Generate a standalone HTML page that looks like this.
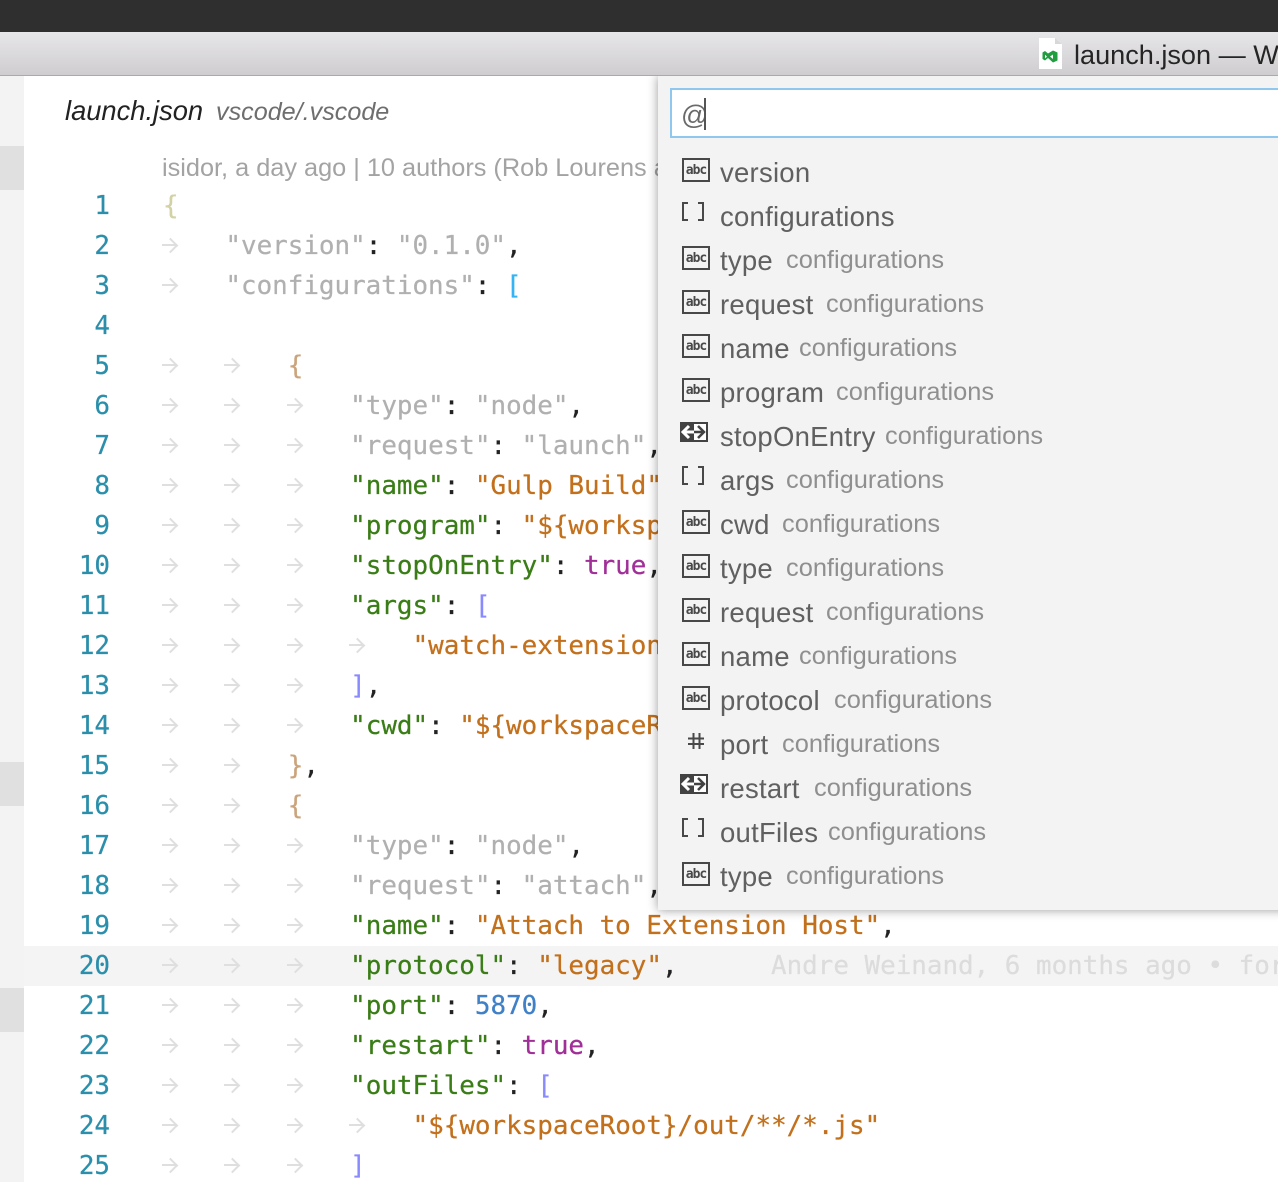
<!DOCTYPE html>
<html><head><meta charset="utf-8">
<style>
html,body{margin:0;padding:0;background:#fff}
#p{position:relative;width:1278px;height:1182px;overflow:hidden;background:#fff;font-family:"Liberation Sans",sans-serif}
#p>div{position:absolute}
.top{left:0;top:0;width:1278px;height:32px;background:#2f2f2f;z-index:2}
.bar{left:0;top:32px;width:1278px;height:43px;background:linear-gradient(#e7e6e8,#cfcdcf);border-bottom:1px solid #aaa;z-index:2}
.side{left:0;top:76px;width:24px;height:1106px;background:#f3f3f3}
.sel{left:0;width:24px;height:44px;background:#e0e0e0}
.hl{left:24px;top:946px;width:1254px;height:40px;background:#f4f4f4}
.n{left:40px;width:70px;height:40px;margin-top:1px;text-align:right;font:25.9px/40px "DejaVu Sans Mono",monospace;color:#2b8fab;-webkit-text-stroke:.25px}
.l{left:163px;height:40px;margin-top:1px;white-space:pre;font:25.9px/40px "DejaVu Sans Mono",monospace;color:#222;-webkit-text-stroke:.25px}
.l i{display:inline-block;width:62.4px;height:40px;position:relative;vertical-align:top;margin-top:-1px}
.l i:before{content:"";position:absolute;left:-1px;top:19px;width:14px;height:2.4px;background:#dfdfdf}
.l i:after{content:"";position:absolute;left:2px;top:14.5px;width:9px;height:9px;border-top:2.4px solid #dfdfdf;border-right:2.4px solid #dfdfdf;transform:rotate(45deg)}
.k{color:#3a7d17}.s{color:#c2701c}.d{color:#b0b0b0}.t{color:#a02f97}.u{color:#3f80c6}.b1{color:#35b4f5}.b2{color:#8a8aff}.b3{color:#cba47c}
.w{left:658px;top:76px;width:640px;height:834px;background:#f3f3f3;box-shadow:0 0 10px rgba(0,0,0,.4)}
.in{left:670px;top:88px;width:640px;height:46px;background:#fff;border:2px solid #8fc8ec}
.r{left:720px;height:44px;line-height:44px;white-space:nowrap;font-size:27.5px;letter-spacing:.25px;color:#606060}
.r span{position:absolute;top:-1px;font-size:25.4px;letter-spacing:0;color:#8f8f8f}
.ab{left:682px;width:24px;height:20px;border:2px solid #484848;font:bold 13px/21px "DejaVu Sans Mono",monospace;color:#484848;text-align:center;letter-spacing:-1px;background:#f3f3f3}
svg{position:absolute;overflow:visible}
</style></head><body><div id="p">
<div class="top"></div>
<div class="bar"></div>
<svg style="left:1039px;top:38px;z-index:3" width="23" height="31"><path d="M0 0h16l7 6v25H0z" fill="#fff"/><path d="M16 0l7 6h-7z" fill="#d8d8d8"/><path d="M14 12.5l4.5 2v8l-4.5 2-5-4.5-3 2.5-2.500-1.500v-6.500l2.500-1.500 3 2.500zM14 16.500l-3 2 3 2.500zM6 16.800v3.600l2-1.800z" fill="#1f9d3f" fill-rule="evenodd"/></svg>
<div style="left:1074px;top:36px;line-height:38px;font-size:27.1px;color:#252525;white-space:nowrap;z-index:3">launch.json — Wo</div>
<div class="side"></div>
<div class="sel" style="top:146px"></div>
<div class="sel" style="top:762px"></div>
<div class="sel" style="top:988px"></div>
<div class="hl"></div>
<div style="left:65px;top:92px;line-height:38px;font-size:27.3px;font-style:italic;color:#222;white-space:nowrap">launch.json</div>
<div style="left:216px;top:93px;line-height:38px;font-size:25.15px;font-style:italic;color:#6e6e6e;white-space:nowrap">vscode/.vscode</div>
<div style="left:162px;top:149px;line-height:38px;font-size:25.3px;color:#a3a3a3;white-space:nowrap">isidor, a day ago | 10 authors (Rob Lourens and others)</div>

<div class="n" style="top:185px">1</div><div class="l" style="top:185px"><span style="color:#d2d2a4">{</span></div>
<div class="n" style="top:225px">2</div><div class="l" style="top:225px"><i></i><span class="d">"version"</span>: <span class="d">"0.1.0"</span>,</div>
<div class="n" style="top:265px">3</div><div class="l" style="top:265px"><i></i><span class="d">"configurations"</span>: <span class="b1">[</span></div>
<div class="n" style="top:305px">4</div>
<div class="n" style="top:345px">5</div><div class="l" style="top:345px"><i></i><i></i><span class="b3">{</span></div>
<div class="n" style="top:385px">6</div><div class="l" style="top:385px"><i></i><i></i><i></i><span class="d">"type"</span>: <span class="d">"node"</span>,</div>
<div class="n" style="top:425px">7</div><div class="l" style="top:425px"><i></i><i></i><i></i><span class="d">"request"</span>: <span class="d">"launch"</span>,</div>
<div class="n" style="top:465px">8</div><div class="l" style="top:465px"><i></i><i></i><i></i><span class="k">"name"</span>: <span class="s">"Gulp Build"</span>,</div>
<div class="n" style="top:505px">9</div><div class="l" style="top:505px"><i></i><i></i><i></i><span class="k">"program"</span>: <span class="s">"${workspaceRoot}"</span>,</div>
<div class="n" style="top:545px">10</div><div class="l" style="top:545px"><i></i><i></i><i></i><span class="k">"stopOnEntry"</span>: <span class="t">true</span>,</div>
<div class="n" style="top:585px">11</div><div class="l" style="top:585px"><i></i><i></i><i></i><span class="k">"args"</span>: <span class="b2">[</span></div>
<div class="n" style="top:625px">12</div><div class="l" style="top:625px"><i></i><i></i><i></i><i></i><span class="s">"watch-extension"</span></div>
<div class="n" style="top:665px">13</div><div class="l" style="top:665px"><i></i><i></i><i></i><span class="b2">]</span>,</div>
<div class="n" style="top:705px">14</div><div class="l" style="top:705px"><i></i><i></i><i></i><span class="k">"cwd"</span>: <span class="s">"${workspaceRoot}"</span></div>
<div class="n" style="top:745px">15</div><div class="l" style="top:745px"><i></i><i></i><span class="b3">}</span>,</div>
<div class="n" style="top:785px">16</div><div class="l" style="top:785px"><i></i><i></i><span class="b3">{</span></div>
<div class="n" style="top:825px">17</div><div class="l" style="top:825px"><i></i><i></i><i></i><span class="d">"type"</span>: <span class="d">"node"</span>,</div>
<div class="n" style="top:865px">18</div><div class="l" style="top:865px"><i></i><i></i><i></i><span class="d">"request"</span>: <span class="d">"attach"</span>,</div>
<div class="n" style="top:905px">19</div><div class="l" style="top:905px"><i></i><i></i><i></i><span class="k">"name"</span>: <span class="s">"Attach to Extension Host"</span>,</div>
<div class="n" style="top:945px">20</div><div class="l" style="top:945px"><i></i><i></i><i></i><span class="k">"protocol"</span>: <span class="s">"legacy"</span>,</div>
<div class="l" style="top:945px;left:771px;color:#dcdcdc">Andre Weinand, 6 months ago • for</div>
<div class="n" style="top:985px">21</div><div class="l" style="top:985px"><i></i><i></i><i></i><span class="k">"port"</span>: <span class="u">5870</span>,</div>
<div class="n" style="top:1025px">22</div><div class="l" style="top:1025px"><i></i><i></i><i></i><span class="k">"restart"</span>: <span class="t">true</span>,</div>
<div class="n" style="top:1065px">23</div><div class="l" style="top:1065px"><i></i><i></i><i></i><span class="k">"outFiles"</span>: <span class="b2">[</span></div>
<div class="n" style="top:1105px">24</div><div class="l" style="top:1105px"><i></i><i></i><i></i><i></i><span class="s">"${workspaceRoot}/out/**/*.js"</span></div>
<div class="n" style="top:1145px">25</div><div class="l" style="top:1145px"><i></i><i></i><i></i><span class="b2">]</span></div>

<div class="w"></div>
<div class="in"></div>
<div style="left:681px;top:96px;line-height:38px;font-size:27px;color:#6a6a6a">@</div>
<div style="left:704px;top:98px;width:2px;height:32px;background:#555"></div>

<div class="ab" style="top:158px">abc</div><div class="r" style="top:151px">version</div>
<svg style="left:682px;top:202px" width="22" height="20"><path d="M6 1H1v17h5M16 1h5v17h-5" fill="none" stroke="#484848" stroke-width="2"/></svg><div class="r" style="top:195px">configurations</div>
<div class="ab" style="top:246px">abc</div><div class="r" style="top:239px">type<span style="left:66px">configurations</span></div>
<div class="ab" style="top:290px">abc</div><div class="r" style="top:283px">request<span style="left:106px">configurations</span></div>
<div class="ab" style="top:334px">abc</div><div class="r" style="top:327px">name<span style="left:79px">configurations</span></div>
<div class="ab" style="top:378px">abc</div><div class="r" style="top:371px">program<span style="left:116px">configurations</span></div>
<svg style="left:680px;top:422px" width="28" height="20"><rect width="28" height="20" fill="#424242"/><rect x="14" y="2" width="12" height="16" fill="#fff"/><path d="M14 10H4M9 4l-6 6 6 6" fill="none" stroke="#fff" stroke-width="3"/><path d="M14 10h10M18 4l6 6-6 6" fill="none" stroke="#424242" stroke-width="2.5"/></svg><div class="r" style="top:415px">stopOnEntry<span style="left:165px">configurations</span></div>
<svg style="left:682px;top:466px" width="22" height="20"><path d="M6 1H1v17h5M16 1h5v17h-5" fill="none" stroke="#484848" stroke-width="2"/></svg><div class="r" style="top:459px">args<span style="left:66px">configurations</span></div>
<div class="ab" style="top:510px">abc</div><div class="r" style="top:503px">cwd<span style="left:62px">configurations</span></div>
<div class="ab" style="top:554px">abc</div><div class="r" style="top:547px">type<span style="left:66px">configurations</span></div>
<div class="ab" style="top:598px">abc</div><div class="r" style="top:591px">request<span style="left:106px">configurations</span></div>
<div class="ab" style="top:642px">abc</div><div class="r" style="top:635px">name<span style="left:79px">configurations</span></div>
<div class="ab" style="top:686px">abc</div><div class="r" style="top:679px">protocol<span style="left:114px">configurations</span></div>
<svg style="left:688px;top:733px" width="17" height="17"><path d="M5.5 0v16M11.5 0v16M0 5.5h16M0 11h16" fill="none" stroke="#484848" stroke-width="2"/></svg><div class="r" style="top:723px">port<span style="left:62px">configurations</span></div>
<svg style="left:680px;top:774px" width="28" height="20"><rect width="28" height="20" fill="#424242"/><rect x="14" y="2" width="12" height="16" fill="#fff"/><path d="M14 10H4M9 4l-6 6 6 6" fill="none" stroke="#fff" stroke-width="3"/><path d="M14 10h10M18 4l6 6-6 6" fill="none" stroke="#424242" stroke-width="2.5"/></svg><div class="r" style="top:767px">restart<span style="left:94px">configurations</span></div>
<svg style="left:682px;top:818px" width="22" height="20"><path d="M6 1H1v17h5M16 1h5v17h-5" fill="none" stroke="#484848" stroke-width="2"/></svg><div class="r" style="top:811px">outFiles<span style="left:108px">configurations</span></div>
<div class="ab" style="top:862px">abc</div><div class="r" style="top:855px">type<span style="left:66px">configurations</span></div>
</div></body></html>
